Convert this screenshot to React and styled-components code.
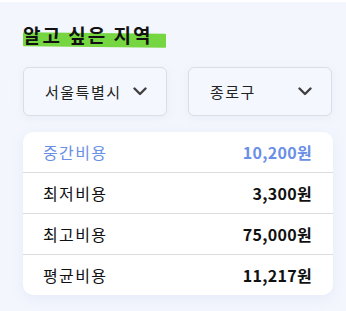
import React from "react";
import styled, { createGlobalStyle } from "styled-components";

const Global = createGlobalStyle`
  html, body { margin: 0; padding: 0; background: #f3f6fd; }
  body { font-family: "Noto Sans CJK KR", "Noto Sans", sans-serif; color: #111; }
  * { box-sizing: border-box; }
`;

const Page = styled.div`
  width: 346px;
  height: 311px;
  background: #f3f6fd;
  border-top: 2px solid #ffffff;
  padding: 20px 13px 0 23px;
  display: flex;
  flex-direction: column;
`;

const Title = styled.h2`
  margin: 0;
  font-size: 19px;
  font-weight: 700;
  line-height: 26px;
  letter-spacing: 2px;
  align-self: flex-start;
  position: relative;
  padding-right: 13px;
  z-index: 0;
  &::before {
    content: "";
    position: absolute;
    left: 0;
    right: 0;
    top: 11px;
    bottom: 1px;
    background: #76d642;
    transform: skewY(0.6deg);
    border-radius: 1px;
    z-index: -1;
  }
`;

const Selects = styled.div`
  display: grid;
  grid-template-columns: 144px 144px;
  column-gap: 21px;
  margin-top: 19px;
`;

const Select = styled.div`
  height: 49px;
  border: 1px solid #dcdee4;
  border-radius: 6px;
  background: #f4f7fe;
  box-shadow: 0 2px 8px rgba(160, 170, 200, 0.12);
  display: flex;
  align-items: center;
  justify-content: space-between;
  padding: 0 19px 0 21px;
  font-size: 15px;
  letter-spacing: 1.5px;
  color: #222;
`;

const Chevron = () => (
  <svg width="14" height="9" viewBox="0 0 14 9" fill="none">
    <path d="M1.5 1.5 L7 7 L12.5 1.5" stroke="#404040" strokeWidth="2.4" strokeLinecap="round" strokeLinejoin="round" />
  </svg>
);

const Card = styled.div`
  margin-top: 16px;
  width: 310px;
  background: #ffffff;
  border-radius: 10px;
  box-shadow: 0 4px 14px rgba(150, 165, 210, 0.12);
  overflow: hidden;
`;

const Row = styled.div`
  height: ${(p) => (p.$last ? 40 : 41)}px;
  display: flex;
  align-items: center;
  justify-content: space-between;
  padding: 0 21px 0 20px;
  font-size: 16px;
  border-bottom: ${(p) => (p.$last ? "none" : "1px solid #dcdcdf")};
  color: ${(p) => (p.$accent ? "#6a8fe6" : "#111")};
`;

const Label = styled.span`
  font-weight: 400;
  letter-spacing: 1.4px;
`;

const Value = styled.span`
  font-weight: 700;
  letter-spacing: 0.3px;
`;

const rows = [
  ["중간비용", "10,200원", true],
  ["최저비용", "3,300원"],
  ["최고비용", "75,000원"],
  ["평균비용", "11,217원"],
];

export default function App() {
  return (
    <>
      <Global />
      <Page>
        <Title>알고 싶은 지역</Title>
        <Selects>
          <Select>
            <span>서울특별시</span>
            <Chevron />
          </Select>
          <Select>
            <span>종로구</span>
            <Chevron />
          </Select>
        </Selects>
        <Card>
          {rows.map(([l, v, a], i) => (
            <Row key={l} $accent={a} $last={i === rows.length - 1}>
              <Label>{l}</Label>
              <Value>{v}</Value>
            </Row>
          ))}
        </Card>
      </Page>
    </>
  );
}
